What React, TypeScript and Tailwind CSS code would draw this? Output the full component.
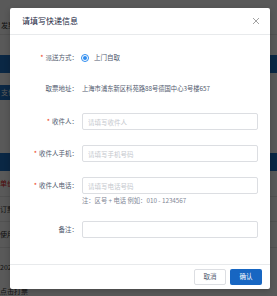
import React from 'react';

const font = { fontFamily: '"Noto Sans CJK SC", "Noto Sans", sans-serif' };

const Label: React.FC<{ text: string; required?: boolean }> = ({ text, required }) => (
  <div className="w-[56px] shrink-0 flex justify-end items-center text-[6.5px] text-[#515a6e] whitespace-nowrap">
    {required && <span className="text-[#ed4014] mr-[2px] text-[7px] leading-none">*</span>}
    <span>{text}：</span>
  </div>
);

const Field: React.FC<{ placeholder?: string }> = ({ placeholder }) => (
  <input
    placeholder={placeholder}
    className="flex-1 h-[17px] border border-[#dcdee2] rounded-[2px] px-[5px] text-[6.5px] outline-none placeholder:text-[#c5c8ce]"
  />
);

const App: React.FC = () => {
  return (
    <div className="relative w-[277px] h-[296px] overflow-hidden bg-white" style={font}>
      {/* page behind the dialog */}
      <div className="flex flex-col text-[7px] text-[#333]">
        <div className="h-[20px]" />
        <div className="h-[15px] border-b border-[#e8e8e8] pl-[1px]">发票</div>
        <div className="h-[20px]" />
        <div className="h-[18px] bg-[#1e6fc2]" />
        <div className="h-[12px]" />
        <div className="h-[15px] flex">
          <div className="w-[40px] bg-[#1e6fc2] text-white flex items-center pl-[1px]">支付</div>
        </div>
        <div className="h-[53px]" />
        <div className="h-[18px] bg-[#1e6fc2]" />
        <div className="h-[26px] border-b border-[#e8e8e8] flex items-center text-[#e02020]">单价</div>
        <div className="h-[25px] border-b border-[#e8e8e8] flex items-center">订票</div>
        <div className="h-[26px] border-b border-[#e8e8e8] flex items-center">使用</div>
        <div className="h-[38px] flex items-center">2023-</div>
        <div className="h-[10px] flex items-center">点击打票</div>
      </div>

      <div className="absolute inset-0 bg-black/[0.65]" />

      {/* dialog */}
      <div className="absolute left-[10px] top-[8px] w-[260px] h-[281px] bg-white rounded-[2px] flex flex-col shadow-[0_2px_6px_rgba(0,0,0,0.2)]">
        <div className="h-[27px] shrink-0 border-b border-[#e8eaec] flex items-center justify-between pl-[12px] pr-[10px]">
          <span className="text-[8px] text-[#17233d]">请填写快递信息</span>
          <svg width="8" height="8" viewBox="0 0 8 8">
            <path d="M1 1L7 7M7 1L1 7" stroke="#999" strokeWidth="0.9" />
          </svg>
        </div>

        <div className="flex-1 flex flex-col pl-[12px] pr-[12px]">
          <div className="mt-[14px] h-[17px] flex items-center gap-[3px]">
            <Label text="派送方式" required />
            <div className="flex items-center gap-[5px] text-[6.5px] text-[#515a6e]">
              <span className="w-[8px] h-[8px] rounded-full border border-[#2d8cf0] flex items-center justify-center">
                <span className="w-[4px] h-[4px] rounded-full bg-[#2d8cf0]" />
              </span>
              <span>上门自取</span>
            </div>
          </div>

          <div className="mt-[14px] h-[17px] flex items-center gap-[4px]">
            <Label text="取票地址" />
            <span className="text-[6.3px] text-[#515a6e] whitespace-nowrap">上海市浦东新区科苑路88号德国中心3号楼657</span>
          </div>

          <div className="mt-[16px] flex items-center gap-[4px]">
            <Label text="收件人" required />
            <Field placeholder="请填写收件人" />
          </div>

          <div className="mt-[15px] flex items-center gap-[4px]">
            <Label text="收件人手机" required />
            <Field placeholder="请填写手机号码" />
          </div>

          <div className="mt-[15px] flex items-center gap-[4px]">
            <Label text="收件人电话" required />
            <Field placeholder="请填写电话号码" />
          </div>
          <div className="pl-[60px] mt-[2px] text-[6.3px] text-[#808695] leading-[10px]">
            注：区号 + 电话 例如：010 - 1234567
          </div>

          <div className="mt-[15px] flex items-center gap-[4px]">
            <Label text="备注" />
            <Field />
          </div>
        </div>

        <div className="h-[25px] shrink-0 border-t border-[#e8eaec] flex items-center justify-end gap-[4px] pr-[8px]">
          <button className="w-[32px] h-[16px] border border-[#dcdee2] rounded-[2px] text-[6.5px] text-[#515a6e] bg-white">
            取消
          </button>
          <button className="w-[32px] h-[16px] rounded-[2px] text-[6.5px] text-white bg-[#1766c2]">
            确认
          </button>
        </div>
      </div>
    </div>
  );
};

export default App;
